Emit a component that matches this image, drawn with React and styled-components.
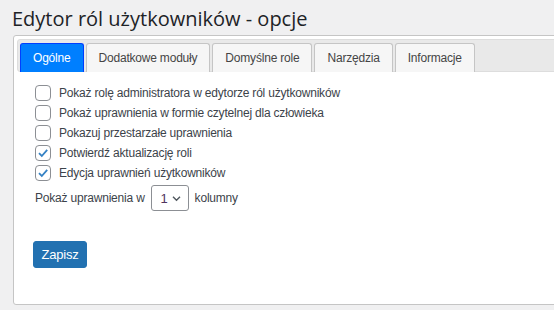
import styled, { createGlobalStyle } from "styled-components";

const GlobalStyle = createGlobalStyle`
  html, body {
    margin: 0;
    padding: 0;
    background: #f0f0f1;
    overflow: hidden;
  }
  body {
    font-family: "Liberation Sans", Arial, sans-serif;
    font-size: 12px;
    letter-spacing: -0.2px;
    color: #3c434a;
  }
`;

const Page = styled.div`
  width: 600px;
  padding: 0 0 0 13px;
`;

const Title = styled.h1`
  margin: 0;
  padding: 6px 0 0 0;
  height: 31px;
  box-sizing: border-box;
  font-family: "Open Sans", "Noto Sans", sans-serif;
  font-weight: 400;
  font-size: 20px;
  line-height: 25px;
  letter-spacing: 0;
  color: #1d2327;
  margin-left: -1px;
`;

const Panel = styled.div`
  margin-top: 4px;
  height: 270px;
  box-sizing: border-box;
  border: 1px solid #c5c5c5;
  border-radius: 3px;
  background: #fff;
  padding: 3px;
`;

const TabBar = styled.ul`
  list-style: none;
  margin: 0;
  padding: 4px 2px 0;
  height: 33px;
  box-sizing: border-box;
  display: flex;
  align-items: flex-end;
  gap: 2px;
  background: #e9e9e9;
  border: 1px solid #dddddd;
  border-radius: 3px;
`;

const Tab = styled.li`
  height: 29px;
  box-sizing: border-box;
  display: flex;
  align-items: center;
  padding: 0 12px;
  margin-bottom: -1px;
  border: 1px solid ${(p) => (p.$active ? "#003eff" : "#c5c5c5")};
  border-bottom: none;
  border-radius: 3px 3px 0 0;
  background: ${(p) => (p.$active ? "#007fff" : "#f6f6f6")};
  color: ${(p) => (p.$active ? "#fff" : "#454545")};
  white-space: nowrap;
  cursor: pointer;
`;

const Content = styled.div`
  padding: 11px 0 0 16px;
`;

const Row = styled.label`
  display: flex;
  align-items: center;
  height: 20px;
  gap: 8px;
  cursor: pointer;
`;

const Box = styled.span`
  width: 16px;
  height: 16px;
  margin-left: 2px;
  box-sizing: border-box;
  border: 1px solid #8c8f94;
  border-radius: 4px;
  background: #fff;
  display: flex;
  align-items: center;
  justify-content: center;
  flex-shrink: 0;
`;

const ColumnsRow = styled.div`
  display: flex;
  align-items: center;
  gap: 6px;
  margin-top: 2px;
  padding-left: 2px;
`;

const Select = styled.div`
  width: 38px;
  height: 26px;
  box-sizing: border-box;
  border: 1px solid #8c8f94;
  border-radius: 3px;
  display: flex;
  align-items: center;
  padding: 0 0 0 9px;
  gap: 4px;
  font-size: 13px;
  color: #50345e;
  background: #fff;
`;

const SaveButton = styled.button`
  margin-top: 30px;
  width: 54px;
  height: 27px;
  border: 1px solid #2271b1;
  border-radius: 3px;
  background: #2271b1;
  color: #fff;
  font-family: "Liberation Sans", Arial, sans-serif;
  font-size: 13px;
  letter-spacing: -0.2px;
  padding: 0;
  cursor: pointer;
`;

const Check = () => (
  <svg width="12" height="12" viewBox="0 0 12 12">
    <path d="M2 6.2 L4.8 9 L10.2 2.8" fill="none" stroke="#3582c4" strokeWidth="1.8" />
  </svg>
);

const Chevron = () => (
  <svg width="9" height="7" viewBox="0 0 10 8">
    <path d="M1 2 L5 6 L9 2" fill="none" stroke="#50575e" strokeWidth="1.6" />
  </svg>
);

const tabs = ["Ogólne", "Dodatkowe moduły", "Domyślne role", "Narzędzia", "Informacje"];

const options = [
  { label: "Pokaż rolę administratora w edytorze ról użytkowników", checked: false },
  { label: "Pokaż uprawnienia w formie czytelnej dla człowieka", checked: false },
  { label: "Pokazuj przestarzałe uprawnienia", checked: false },
  { label: "Potwierdź aktualizację roli", checked: true },
  { label: "Edycja uprawnień użytkowników", checked: true },
];

export default function App() {
  return (
    <>
      <GlobalStyle />
      <Page>
        <Title>Edytor ról użytkowników - opcje</Title>
        <Panel>
          <TabBar>
            {tabs.map((t, i) => (
              <Tab key={t} $active={i === 0}>
                {t}
              </Tab>
            ))}
          </TabBar>
          <Content>
            {options.map((o) => (
              <Row key={o.label}>
                <Box>{o.checked && <Check />}</Box>
                {o.label}
              </Row>
            ))}
            <ColumnsRow>
              Pokaż uprawnienia w
              <Select>
                1
                <Chevron />
              </Select>
              kolumny
            </ColumnsRow>
            <SaveButton>Zapisz</SaveButton>
          </Content>
        </Panel>
      </Page>
    </>
  );
}
